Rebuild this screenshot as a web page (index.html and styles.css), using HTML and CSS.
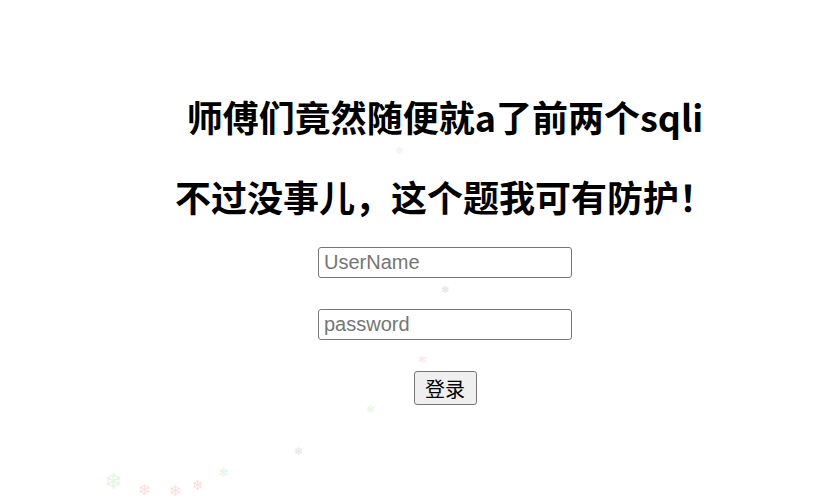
FILE: index.html
```html
<!DOCTYPE html>
<html lang="zh">
<head>
<meta charset="utf-8">
<title>sqli</title>
<link rel="stylesheet" href="styles.css">
</head>
<body>
<div class="page">
  <h1 class="title">师傅们竟然随便就a了前两个sqli</h1>
  <h1 class="title">不过没事儿，这个题我可有防护！</h1>
  <form class="login">
    <input class="field" type="text" placeholder="UserName">
    <input class="field" type="password" placeholder="password">
    <button class="submit" type="button">登录</button>
  </form>
</div>
<div class="snow">
  <span class="flake f1">❄</span>
  <span class="flake f2">❄</span>
  <span class="flake f3">❄</span>
  <span class="flake f4">❄</span>
  <span class="flake f5">❄</span>
  <span class="flake f6">❄</span>
  <span class="flake f7">❄</span>
  <span class="flake f8">❄</span>
  <span class="flake f9">❄</span>
  <span class="flake f10">❄</span>
</div>
</body>
</html>
```

FILE: styles.css
```css
html, body {
  margin: 0;
  padding: 0;
  background: #ffffff;
}

body {
  font-family: "Liberation Sans", "Noto Sans CJK SC", sans-serif;
  color: #000;
  width: 832px;
  height: 503px;
  overflow: hidden;
  position: relative;
}

.page {
  padding-left: 58px;
  padding-top: 96px;
  display: flex;
  flex-direction: column;
  align-items: center;
}

.title {
  margin: 0 0 40px 0;
  font-family: "Noto Sans CJK SC", sans-serif;
  font-weight: 700;
  font-size: 36px;
  line-height: 40px;
  white-space: nowrap;
  text-align: center;
}

.title + .title {
  margin-bottom: 31px;
}

.login {
  display: flex;
  flex-direction: column;
  align-items: center;
  gap: 31px;
}

.field {
  box-sizing: border-box;
  width: 254px;
  height: 31px;
  margin: 0;
  padding: 0 5px;
  border: 1px solid #767676;
  border-radius: 3px;
  font-family: "Liberation Sans", sans-serif;
  font-size: 20px;
  color: #000;
  background: #fff;
  outline: none;
}

.field::placeholder {
  color: #757575;
}

.submit {
  box-sizing: border-box;
  width: 63px;
  height: 34px;
  margin: 0;
  padding: 0;
  border: 1px solid #767676;
  border-radius: 3px;
  background: #efefef;
  font-family: "Noto Sans CJK SC", sans-serif;
  font-size: 20px;
  color: #000;
}

.snow {
  position: absolute;
  inset: 0;
  pointer-events: none;
}

.flake {
  position: absolute;
  font-family: "DejaVu Sans", sans-serif;
  line-height: 1;
}

.f1 { left: 395px; top: 146px; font-size: 10px; color: #e6f7e6; }
.f2 { left: 441px; top: 285px; font-size: 10px; color: #e2e2e2; }
.f3 { left: 418px; top: 355px; font-size: 10px; color: #fbe3e3; }
.f4 { left: 366px; top: 404px; font-size: 11px; color: #e1f7e1; }
.f5 { left: 294px; top: 446px; font-size: 11px; color: #e4e4e4; }
.f6 { left: 104px; top: 471px; font-size: 22px; color: #e3f8e3; }
.f7 { left: 138px; top: 483px; font-size: 15px; color: #fbdede; }
.f8 { left: 169px; top: 484px; font-size: 15px; color: #fbe0e0; }
.f9 { left: 192px; top: 478px; font-size: 14px; color: #fbdcdc; }
.f10 { left: 218px; top: 466px; font-size: 13px; color: #dff7df; }
```
